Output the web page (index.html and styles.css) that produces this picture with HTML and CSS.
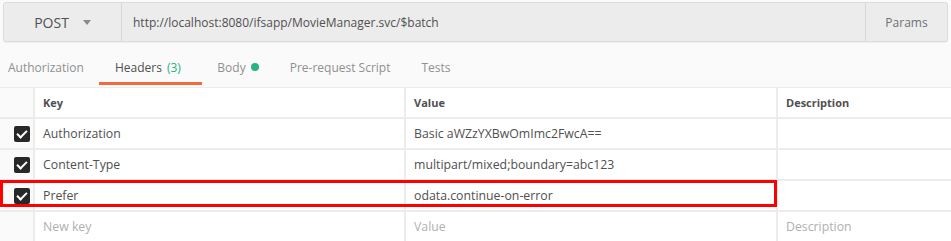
FILE: index.html
```html
<!DOCTYPE html>
<html lang="en">
<head>
  <meta charset="UTF-8">
  <title>Request Headers</title>
  <link rel="stylesheet" href="styles.css">
</head>
<body>
  <div class="request-bar">
    <div class="method">POST <span class="caret"></span></div>
    <div class="url">http://localhost:8080/ifsapp/MovieManager.svc/$batch</div>
    <div class="params">Params</div>
  </div>

  <div class="tabs">
    <div class="tab">Authorization</div>
    <div class="tab active">Headers <span class="count">(3)</span></div>
    <div class="tab">Body <span class="dot"></span></div>
    <div class="tab">Pre-request Script</div>
    <div class="tab">Tests</div>
  </div>

  <div class="headers">
    <div class="row head">
      <div class="cell check"></div>
      <div class="cell">Key</div>
      <div class="cell">Value</div>
      <div class="cell">Description</div>
    </div>
    <div class="row">
      <div class="cell check"><span class="box"></span></div>
      <div class="cell">Authorization</div>
      <div class="cell">Basic aWZzYXBwOmImc2FwcA==</div>
      <div class="cell"></div>
    </div>
    <div class="row">
      <div class="cell check"><span class="box"></span></div>
      <div class="cell">Content-Type</div>
      <div class="cell">multipart/mixed;boundary=abc123</div>
      <div class="cell"></div>
    </div>
    <div class="row marked">
      <div class="cell check"><span class="box"></span></div>
      <div class="cell">Prefer</div>
      <div class="cell">odata.continue-on-error</div>
      <div class="cell"></div>
      <div class="highlight"></div>
    </div>
    <div class="row empty">
      <div class="cell check"></div>
      <div class="cell">New key</div>
      <div class="cell">Value</div>
      <div class="cell">Description</div>
    </div>
  </div>
</body>
</html>
```

FILE: styles.css
```css
body {
  margin: 0;
  background-color: #fafafa;
  font-family: "Open Sans", "Noto Sans", sans-serif;
  color: #505050;
  font-size: 12px;
}
.request-bar {
  display: flex;
  height: 38px;
  margin: 2px 3px 0 3px;
  background-color: #ececec;
  border: 1px solid #dcdcdc;
  border-radius: 3px;
  box-shadow: 0 1px 1px rgba(0, 0, 0, 0.05);
}
.method {
  width: 117px;
  border-right: 1px solid #d6d6d6;
  display: flex;
  align-items: center;
  justify-content: center;
  font-size: 14px;
  color: #505050;
  gap: 14px;
}
.caret {
  width: 0;
  height: 0;
  border-left: 4px solid transparent;
  border-right: 4px solid transparent;
  border-top: 5px solid #8a8a8a;
}
.url {
  flex: 1;
  display: flex;
  align-items: center;
  padding-left: 11px;
  font-size: 12px;
  color: #505050;
}
.params {
  width: 81px;
  border-left: 1px solid #d6d6d6;
  display: flex;
  align-items: center;
  justify-content: center;
  font-size: 12px;
  color: #707070;
}
.tabs {
  display: flex;
  height: 40px;
  margin-top: 3px;
}
.tab {
  padding: 7px 15.5px 0 15.5px;
  display: flex;
  align-items: center;
  gap: 5px;
  font-size: 12px;
  color: #909090;
  border-bottom: 3px solid transparent;
}
.tab:first-child {
  padding-left: 8px;
}
.tab.active {
  color: #505050;
  border-bottom-color: #f26b3a;
  padding-right: 21px;
}
.count {
  color: #26b47f;
}
.dot {
  width: 8px;
  height: 8px;
  border-radius: 50%;
  background-color: #26b47f;
}
.headers {
  margin-top: 2px;
  border-top: 1px solid #ececec;
}
.row {
  display: grid;
  grid-template-columns: 33px 371px 372px 1fr;
  height: 29px;
  border-bottom: 2px solid #ececec;
  background-color: #ffffff;
  position: relative;
}
.cell {
  display: flex;
  align-items: center;
  padding-left: 8px;
  border-left: 2px solid #ececec;
  font-size: 12.3px;
}
.cell.check {
  border-left: none;
  padding-left: 14px;
  background-color: #fafafa;
}
.head .cell {
  font-size: 11px;
  font-weight: bold;
  color: #505050;
}
.empty .cell {
  color: #b0b0b0;
}
.box {
  width: 16px;
  height: 16px;
  background-color: #282828;
  border-radius: 2px;
  position: relative;
}
.box::after {
  content: "";
  position: absolute;
  left: 5px;
  top: 2px;
  width: 4px;
  height: 8px;
  border: solid #ffffff;
  border-width: 0 2px 2px 0;
  transform: rotate(45deg);
}
.highlight {
  position: absolute;
  left: 0;
  top: -1px;
  width: 771px;
  height: 21px;
  border: 3px solid #ff0000;
}
```
